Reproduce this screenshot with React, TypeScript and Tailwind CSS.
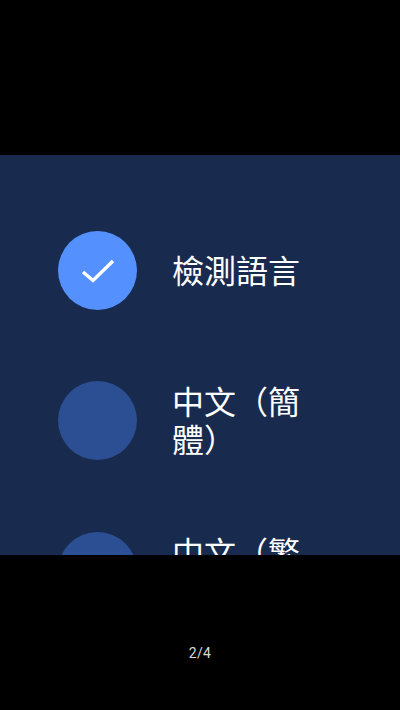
const cjk = "font-['Noto_Sans_CJK_TC','Noto_Sans_CJK_SC',sans-serif]";

function Row({ checked, label, className }: { checked?: boolean; label: string; className: string }) {
  return (
    <div className={`flex items-start pl-[58px] pr-[80px] shrink-0 ${className}`}>
      <div className={`w-[79px] h-[79px] shrink-0 rounded-full flex items-center justify-center ${checked ? "bg-[#5590ff]" : "bg-[#2b4f92]"}`}>
        {checked && (
          <svg width="36" height="36" viewBox="0 0 36 36" fill="none" stroke="white" strokeWidth="3.4">
            <path d="M3 19 L13 27.5 L33 8" />
          </svg>
        )}
      </div>
      <div className="h-[79px] flex items-center ml-[35px] pb-[4px]">
        <div className={`text-[32px] leading-[38px] text-white ${cjk}`}>{label}</div>
      </div>
    </div>
  );
}

export default function App() {
  return (
    <div className="w-[400px] h-[710px] bg-black flex flex-col">
      <div className="h-[155px] shrink-0" />
      <div className="h-[400px] shrink-0 bg-[#182b4f] overflow-hidden flex flex-col pt-[76px] gap-[71px]">
        <Row checked label="檢測語言" className="h-[79px]" />
        <Row label="中文（簡體）" className="h-[80px]" />
        <Row label="中文（繁體）" className="h-[80px]" />
      </div>
      <div className="flex-1 flex justify-center pt-[88px]">
        <span className="text-[14px] leading-[20px] text-[#d8d8d8] font-['Roboto',sans-serif] tracking-[0.3px]">2/4</span>
      </div>
    </div>
  );
}
